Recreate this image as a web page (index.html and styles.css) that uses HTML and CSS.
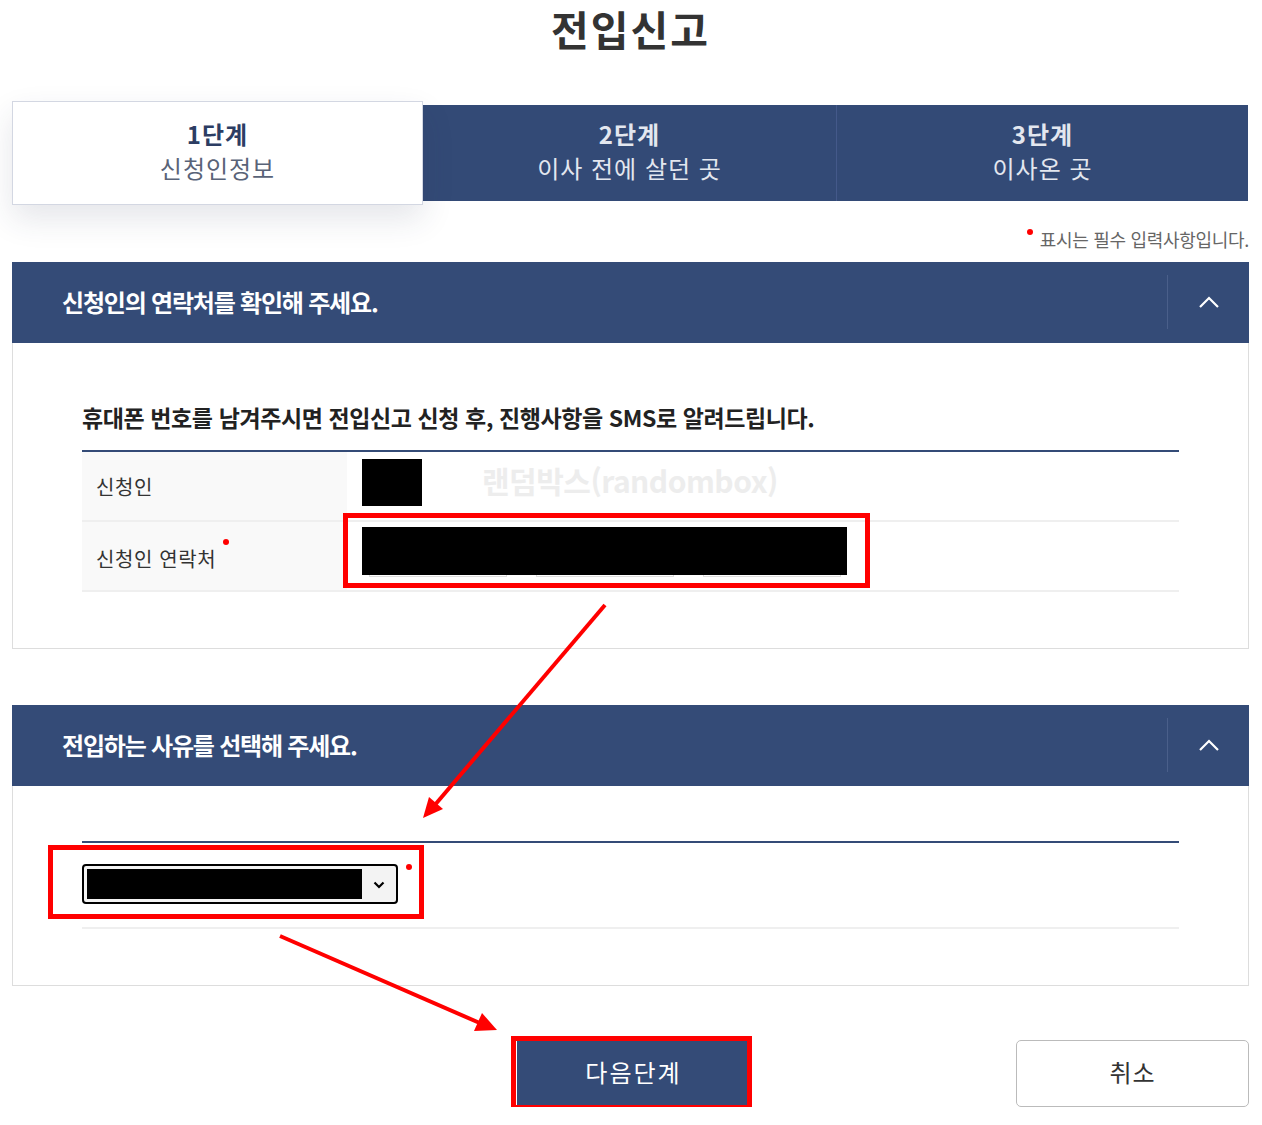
FILE: index.html
```html
<!DOCTYPE html>
<html lang="ko">
<head>
    <meta charset="UTF-8">
    <meta name="viewport" content="width=device-width, initial-scale=1.0">
    <title>전입신고</title>
    <link rel="stylesheet" href="styles.css">
</head>
<body>
    <div class="page">
        <h1 class="title">전입신고</h1>

        <div class="steps">
            <div class="step active">
                <strong>1단계</strong>
                <span>신청인정보</span>
            </div>
            <div class="step">
                <strong>2단계</strong>
                <span>이사 전에 살던 곳</span>
            </div>
            <div class="step">
                <strong>3단계</strong>
                <span>이사온 곳</span>
            </div>
        </div>

        <p class="req-note"><i class="dot"></i>표시는 필수 입력사항입니다.</p>

        <!-- 신청인 연락처 -->
        <div class="section">
            <div class="section-head">
                <h2>신청인의 연락처를 확인해 주세요.</h2>
                <button class="toggle" type="button">
                    <svg width="22" height="14" viewBox="0 0 22 14"><path d="M2 12 L11 3 L20 12" fill="none" stroke="#fff" stroke-width="2.2"/></svg>
                </button>
            </div>
            <div class="section-body">
                <p class="notice">휴대폰 번호를 남겨주시면 전입신고 신청 후, 진행사항을 SMS로 알려드립니다.</p>
                <table class="form-table">
                    <tr>
                        <th>신청인</th>
                        <td class="cell-name">
                            <div class="mask mask-name"></div>
                            <span class="watermark">랜덤박스(randombox)</span>
                        </td>
                    </tr>
                    <tr>
                        <th>신청인 연락처<i class="dot"></i></th>
                        <td class="cell-phone">
                            <div class="phone">
                                <div class="phone-box"></div>
                                <div class="phone-box"></div>
                                <div class="phone-box"></div>
                                <div class="mask mask-phone"></div>
                            </div>
                        </td>
                    </tr>
                </table>
            </div>
        </div>

        <!-- 전입 사유 -->
        <div class="section section-last">
            <div class="section-head">
                <h2>전입하는 사유를 선택해 주세요.</h2>
                <button class="toggle" type="button">
                    <svg width="22" height="14" viewBox="0 0 22 14"><path d="M2 12 L11 3 L20 12" fill="none" stroke="#fff" stroke-width="2.2"/></svg>
                </button>
            </div>
            <div class="section-body body-short">
                <div class="reason-row">
                    <div class="select">
                        <div class="mask mask-select"></div>
                        <div class="select-arrow">
                            <svg width="12" height="8" viewBox="0 0 12 8"><path d="M1.5 1.5 L6 6 L10.5 1.5" fill="none" stroke="#000" stroke-width="2.2"/></svg>
                        </div>
                    </div>
                    <i class="dot"></i>
                </div>
            </div>
        </div>

        <div class="btn-area">
            <button class="btn btn-next" type="button">다음단계</button>
            <button class="btn btn-cancel" type="button">취소</button>
        </div>
    </div>

    <!-- 빨간 표시 (주석) -->
    <svg class="marks" width="1262" height="1125" viewBox="0 0 1262 1125">
        <rect x="345.5" y="515.5" width="522" height="70" fill="none" stroke="#ff0000" stroke-width="5"/>
        <rect x="50.5" y="847.5" width="371" height="69" fill="none" stroke="#ff0000" stroke-width="5"/>
        <rect x="513.5" y="1038.5" width="236" height="69" fill="none" stroke="#ff0000" stroke-width="5"/>
        <line x1="605" y1="605" x2="434" y2="806" stroke="#ff0000" stroke-width="4"/>
        <polygon points="423,818 443,809 429,797" fill="#ff0000"/>
        <line x1="280" y1="936" x2="482" y2="1024" stroke="#ff0000" stroke-width="4"/>
        <polygon points="497,1030 474,1031 482,1013" fill="#ff0000"/>
    </svg>
</body>
</html>
```

FILE: styles.css
```css
body {
    margin: 0;
    background-color: #fff;
    font-family: "Noto Sans CJK KR", "Noto Sans", sans-serif;
    color: #333;
    position: relative;
}

.page {
    width: 1237px;
    margin-left: 12px;
}

.title {
    margin: 0;
    height: 101px;
    text-align: center;
    font-size: 41px;
    line-height: 56px;
    font-weight: 700;
    letter-spacing: 2px;
    color: #333;
}

.steps {
    display: flex;
    align-items: center;
    height: 104px;
}

.step {
    height: 96px;
    box-sizing: border-box;
    padding-bottom: 4px;
    background-color: #334a76;
    color: #e3e7ef;
    display: flex;
    flex-direction: column;
    align-items: center;
    justify-content: center;
    font-size: 24px;
    line-height: 34px;
}

.step:nth-child(1) { width: 411px; }
.step:nth-child(2) { width: 413px; }
.step:nth-child(3) { width: 412px; border-left: 1px solid #44598a; }

.step strong {
    font-weight: 700;
    letter-spacing: 1px;
}

.step span {
    letter-spacing: 1px;
}

.step.active {
    height: 104px;
    background-color: #fff;
    border: 1px solid #d3d7e2;
    box-shadow: 0 14px 30px rgba(40, 50, 80, 0.12);
    color: #596378;
    position: relative;
    z-index: 1;
}

.step.active strong {
    color: #2c3d63;
}

.req-note {
    margin: 0;
    height: 57px;
    padding-top: 22px;
    box-sizing: border-box;
    text-align: right;
    font-size: 18px;
    line-height: 24px;
    color: #666;
    letter-spacing: -0.3px;
}

.req-note .dot {
    vertical-align: 12px;
    margin-right: 7px;
}

.dot {
    display: inline-block;
    width: 6px;
    height: 6px;
    border-radius: 50%;
    background-color: #ff0000;
}

.section {
    margin-bottom: 56px;
}

.section-last {
    margin-bottom: 54px;
}

.section-head {
    height: 81px;
    box-sizing: border-box;
    padding-bottom: 2px;
    background-color: #344b77;
    display: flex;
    align-items: center;
    justify-content: space-between;
    padding-left: 50px;
}

.section-head h2 {
    margin: 0;
    color: #fff;
    font-size: 24px;
    font-weight: 700;
    letter-spacing: -1.2px;
}

.toggle {
    width: 82px;
    height: 54px;
    border: none;
    border-left: 1px solid #4a5f8a;
    background: transparent;
    display: flex;
    align-items: center;
    justify-content: center;
    padding: 0;
}

.section-body {
    border: 1px solid #ddd;
    border-top: none;
    padding: 57px 69px 56px 69px;
}

.notice {
    margin: 0 0 16px;
    font-size: 23px;
    line-height: 34px;
    font-weight: 700;
    letter-spacing: -0.4px;
    color: #222;
}

.form-table {
    width: 100%;
    border-collapse: collapse;
    border-top: 2px solid #344b77;
}

.form-table th,
.form-table td {
    height: 68px;
    border-bottom: 2px solid #efefef;
    padding: 0;
}

.form-table th {
    width: 265px;
    background-color: #f9f9f9;
    text-align: left;
    padding-left: 14px;
    font-size: 20px;
    font-weight: 400;
    letter-spacing: 0.6px;
    color: #333;
    box-sizing: border-box;
}

.form-table th .dot {
    vertical-align: 22px;
    margin-left: 7px;
}

.form-table td {
    padding-left: 15px;
    position: relative;
    vertical-align: top;
}

.form-table .cell-name {
    height: 61px;
    padding-top: 7px;
}

.form-table .cell-phone {
    height: 63px;
    padding-top: 5px;
}

.mask {
    background-color: #000;
}

.mask-name {
    width: 60px;
    height: 47px;
}

.watermark {
    position: absolute;
    left: 135px;
    top: 6px;
    font-size: 30px;
    font-weight: 700;
    color: #ededed;
    letter-spacing: -0.5px;
}

.phone {
    position: relative;
    display: flex;
    gap: 29px;
    padding-left: 7px;
    height: 50px;
}

.phone-box {
    width: 136px;
    height: 48px;
    border: 1px solid #ddd;
}

.mask-phone {
    position: absolute;
    left: 0;
    top: 0;
    width: 485px;
    height: 48px;
}

.body-short {
    padding-top: 55px;
    padding-bottom: 56px;
}

.reason-row {
    border-top: 2px solid #344b77;
    border-bottom: 2px solid #efefef;
    height: 84px;
    display: flex;
    align-items: center;
}

.select {
    width: 316px;
    height: 40px;
    margin-top: -2px;
    border: 2px solid #000;
    border-radius: 4px;
    box-sizing: border-box;
    display: flex;
    align-items: center;
    padding-left: 3px;
    background-color: #f3f3f3;
}

.mask-select {
    width: 275px;
    height: 30px;
}

.select-arrow {
    flex: 1;
    display: flex;
    justify-content: center;
    padding-top: 2px;
}

.reason-row .dot {
    align-self: flex-start;
    margin-top: 21px;
    margin-left: 8px;
}

.btn-area {
    display: grid;
    grid-template-columns: 1fr auto 1fr;
    align-items: start;
}

.btn {
    font-family: "Noto Sans CJK KR", "Noto Sans", sans-serif;
    font-size: 24px;
    cursor: pointer;
    padding: 0 0 4px;
}

.btn-next {
    grid-column: 2;
    width: 233px;
    height: 66px;
    margin-left: 6px;
    background-color: #344b77;
    color: #fff;
    border: none;
    letter-spacing: 2px;
}

.btn-cancel {
    grid-column: 3;
    justify-self: end;
    width: 233px;
    height: 67px;
    background-color: #fff;
    color: #333;
    border: 1px solid #bbb;
    border-radius: 5px;
    letter-spacing: 1px;
}

.marks {
    position: absolute;
    left: 0;
    top: 0;
    pointer-events: none;
}
```
